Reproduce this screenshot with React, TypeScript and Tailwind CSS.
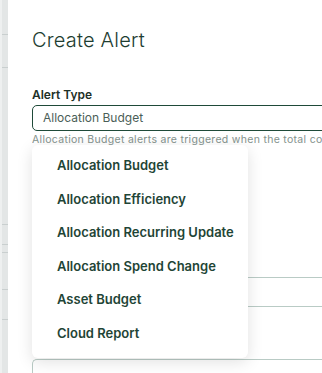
const ALERT_TYPES = [
  'Allocation Budget',
  'Allocation Efficiency',
  'Allocation Recurring Update',
  'Allocation Spend Change',
  'Asset Budget',
  'Cloud Report',
];

export default function App() {
  return (
    <div
      className="relative w-[322px] h-[373px] overflow-hidden bg-white flex"
      style={{ fontFamily: 'Inter, "Noto Sans", sans-serif' }}
    >
      {/* left edge of page behind the drawer */}
      <div className="w-2 shrink-0 bg-[#e3e6e6] border-l-2 border-[#eef0f0] flex flex-col">
        <div className="h-[35px] shrink-0 border-b border-[#c9cfcf]" />
        <div className="h-[33px] shrink-0 border-b border-[#c9cfcf]" />
        <div className="h-[157px] shrink-0 border-b border-[#c9cfcf]" />
        <div className="h-[20px] shrink-0 border-b border-[#c9cfcf]" />
        <div className="h-[8px] shrink-0 border-b border-[#c9cfcf]" />
        <div className="h-[37px] shrink-0 border-b border-[#c9cfcf]" />
        <div className="h-[30px] shrink-0 border-b border-[#c9cfcf]" />
      </div>

      <div className="flex-1 min-w-0 pl-6 pt-[26px]">
        <h2 className="text-[20px] leading-7 font-light text-[#1d3d31] tracking-[0.2px]">Create Alert</h2>

        <label className="block mt-[33px] text-[12px] leading-4 font-semibold text-[#1d3027]">Alert Type</label>
        <div className="mt-[2px] h-[26px] -mr-4 border-[1.5px] border-[#1f4a39] rounded-[5px] flex items-center pl-[10px]">
          <span className="text-[12px] text-[#4b5e57]">Allocation Budget</span>
        </div>
        <p className="mt-[3px] text-[10.5px] leading-3 tracking-[0.3px] text-[#84928d] whitespace-nowrap overflow-hidden">
          Allocation Budget alerts are triggered when the total cost of allocation exceeds
        </p>

        <div className="mt-[131px] h-[30px] -mr-4 border-y border-[#b9cbc5]" />
        <div className="mt-[52px] h-[30px] -mr-4 border-l border-t border-[#b9cbc5] rounded-tl-[5px]" />
      </div>

      {/* dropdown */}
      <div className="absolute left-8 top-[145px] w-[216px] bg-white rounded-[6px] shadow-[0_4px_16px_rgba(0,0,0,0.12)] pt-1 pb-2">
        {ALERT_TYPES.map((t) => (
          <div key={t} className="h-[33.5px] flex items-center pl-[25px] text-[13px] font-semibold text-[#1f4536]">
            {t}
          </div>
        ))}
      </div>
    </div>
  );
}
